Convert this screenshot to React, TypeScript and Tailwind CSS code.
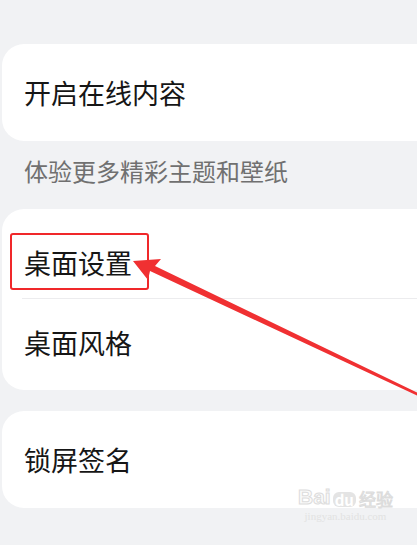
import React from 'react';

const Row = ({ label, divider, shift }: { label: string; divider?: boolean; shift: string }) => (
  <div className={`relative flex h-[90px] items-center pl-[22px] ${shift}`}>
    <span className="text-[27px] leading-none text-[#161616]">{label}</span>
    {divider && <div className="absolute bottom-0 left-[20px] right-0 h-px bg-[#ececee]" />}
  </div>
);

const App = () => {
  return (
    <div
      className="relative h-[545px] w-[417px] overflow-hidden bg-[#f1f2f4] pl-[2px] pt-[44px]"
      style={{ fontFamily: '"Noto Sans CJK SC", "Noto Sans", sans-serif' }}
    >
      <div className="-mr-[30px] flex h-[97px] items-center rounded-l-[22px] bg-white pl-[22px]">
        <span className="text-[27px] leading-none text-[#161616]">开启在线内容</span>
      </div>

      <div className="flex h-[68px] items-center pb-[8px] pl-[22px]">
        <span className="text-[24px] leading-none text-[#707070]">体验更多精彩主题和壁纸</span>
      </div>

      <div className="-mr-[30px] flex h-[181px] flex-col rounded-l-[22px] bg-white">
        <Row label="桌面设置" divider shift="pt-[16px]" />
        <Row label="桌面风格" shift="pb-[4px]" />
      </div>

      <div className="-mr-[30px] mt-[21px] flex h-[97px] items-center rounded-l-[22px] bg-white pl-[22px]">
        <span className="text-[27px] leading-none text-[#161616]">锁屏签名</span>
      </div>

      {/* annotation box */}
      <div className="absolute left-[10px] top-[233px] h-[57px] w-[139px] rounded-[3px] border-2 border-[#f0282a]" />

      {/* annotation arrow */}
      <svg className="absolute left-0 top-0" width="417" height="545" viewBox="0 0 417 545">
        <polygon
          points="133,261 161,259 155,266 418,393 418,396 150,271 148,280"
          fill="#f03032"
        />
      </svg>

      {/* watermark */}
      <div className="absolute left-[298px] top-[486px] flex flex-col items-center leading-none">
        <div className="flex items-end">
          <span
            className="text-[21px] font-bold text-[#fafafa]"
            style={{ fontFamily: '"Liberation Sans", sans-serif', WebkitTextStroke: '1px #dcdcdc' }}
          >
            Bai
          </span>
          <span className="ml-[2px] rounded-[6px] bg-[#e4e4e4] px-[2px] text-[15px] font-bold text-white">du</span>
          <span className="ml-[3px] text-[17px] text-[#fafafa]" style={{ WebkitTextStroke: '1px #dcdcdc' }}>
            经验
          </span>
        </div>
        <span
          className="mt-[4px] text-[11px] text-[#e2e2e2]"
          style={{ fontFamily: '"Liberation Serif", serif' }}
        >
          jingyan.baidu.com
        </span>
      </div>
    </div>
  );
};

export default App;
